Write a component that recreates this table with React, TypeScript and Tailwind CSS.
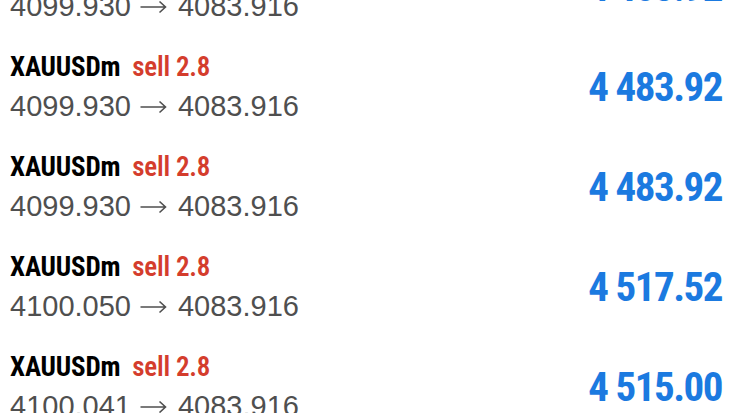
import React from 'react';

type Deal = { symbol: string; side: string; volume: string; open: string; close: string; profit: string };

const deals: Deal[] = [
  { symbol: 'XAUUSDm', side: 'sell', volume: '2.8', open: '4099.930', close: '4083.916', profit: '4 483.92' },
  { symbol: 'XAUUSDm', side: 'sell', volume: '2.8', open: '4099.930', close: '4083.916', profit: '4 483.92' },
  { symbol: 'XAUUSDm', side: 'sell', volume: '2.8', open: '4099.930', close: '4083.916', profit: '4 483.92' },
  { symbol: 'XAUUSDm', side: 'sell', volume: '2.8', open: '4100.050', close: '4083.916', profit: '4 517.52' },
  { symbol: 'XAUUSDm', side: 'sell', volume: '2.8', open: '4100.041', close: '4083.916', profit: '4 515.00' },
];

const condensed = { fontStretch: 'condensed' } as const;

// thin long arrow between open and close price
const Arrow = () => (
  <svg width="27" height="14" viewBox="0 0 27 14" className="ml-[9px] mr-[11px] shrink-0">
    <path d="M0.5 7H25.5M19.5 1.5L25.5 7L19.5 12.5" fill="none" stroke="#4f4f4f" strokeWidth="1.6" />
  </svg>
);

function DealRow({ deal }: { deal: Deal }) {
  return (
    <div className="h-[100px] flex items-center justify-between pl-[10px] pr-[13px]">
      <div className="flex flex-col">
        <div className="text-[27px] leading-[39px] font-bold font-['Roboto',sans-serif] tracking-[-0.2px]" style={condensed}>
          <span className="text-black">{deal.symbol}</span>
          <span className="ml-[12px] text-[#d43d2d] font-semibold">
            {deal.side} {deal.volume}
          </span>
        </div>
        <div className="flex items-center h-[39px] text-[29px] leading-[39px] text-[#4f4f4f] font-['Liberation_Sans',Arial,sans-serif]">
          <span>{deal.open}</span>
          <Arrow />
          <span>{deal.close}</span>
        </div>
      </div>
      <div
        className="text-[41px] leading-none font-bold tracking-[-1.5px] text-[#1b7ae0] font-['Roboto',sans-serif]"
        style={condensed}
      >
        {deal.profit}
      </div>
    </div>
  );
}

export default function App() {
  return (
    <div className="w-full h-[413px] overflow-hidden bg-white">
      <div className="-mt-[63px]">
        {deals.map((d, i) => (
          <DealRow key={i} deal={d} />
        ))}
      </div>
    </div>
  );
}
